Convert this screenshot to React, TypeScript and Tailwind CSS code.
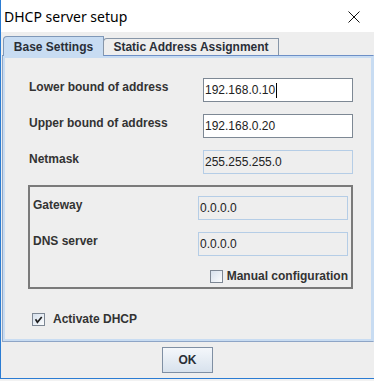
const LABEL = "text-[12px] leading-[16px] font-bold text-[#333333] mt-[1px]";
const FONT = { fontFamily: '"Liberation Sans", Arial, sans-serif' };

function TextField({ value, caret, disabled }: { value: string; caret?: boolean; disabled?: boolean }) {
  return (
    <div
      className={
        "w-[150px] h-[24px] flex items-center pl-[1px] text-[12px] text-[#222222] border " +
        (disabled ? "bg-[#eeeeee] border-[#b5cde6]" : "bg-white border-[#7d8894]")
      }
    >
      <span>{value}</span>
      {caret && <span className="w-px h-[15px] bg-black ml-[1px]" />}
    </div>
  );
}

function FieldRow({ label, labelWidth, children }: { label: string; labelWidth: string; children: React.ReactNode }) {
  return (
    <div className="flex items-start">
      <div className={labelWidth + " " + LABEL}>{label}</div>
      {children}
    </div>
  );
}

function CheckBox({ checked }: { checked?: boolean }) {
  return (
    <div className="w-[13px] h-[13px] border border-[#7d8794] bg-gradient-to-br from-[#d6e0ec] to-[#fbfcfd] flex items-center justify-center shrink-0">
      {checked && (
        <svg width="11" height="11" viewBox="0 0 11 11">
          <path d="M3 6 L4.4 8.2 L8.2 3.6" fill="none" stroke="#1e1e1e" strokeWidth="1.7" strokeLinecap="square" />
        </svg>
      )}
    </div>
  );
}

export default function App() {
  return (
    <div className="w-[374px] h-[381px] bg-[#f2f2f2]" style={FONT}>
      <div className="w-[374px] h-[379px] border-l border-b border-[#2b7cd3] bg-[#eeeeee] flex flex-col">
        {/* title bar */}
        <div className="h-[32px] bg-white flex items-center justify-between pl-[3px] pr-[14px] shrink-0">
          <span className="text-[14px] text-black pt-[1px]" style={{ fontFamily: '"Segoe UI", "Noto Sans", sans-serif' }}>
            DHCP server setup
          </span>
          <svg width="12" height="12" viewBox="0 0 12 12" className="mt-[2px]">
            <path d="M0.5 0.5 L11.5 11.5 M11.5 0.5 L0.5 11.5" stroke="#111" strokeWidth="1" />
          </svg>
        </div>

        {/* tabs */}
        <div className="h-[24px] -mb-px flex items-end pl-[2px] relative z-10 shrink-0">
          <div className="w-[101px] h-[20px] bg-[#c8dcf2] border-l border-t border-r border-[#7f98b8] rounded-tl-[4px] flex items-center justify-center text-[12px] font-bold text-[#2a2f38]">
            Base Settings
          </div>
          <div className="w-[176px] h-[17px] mb-px -ml-px bg-[#eeeeee] border-l border-t border-r border-[#8796a8] rounded-tl-[4px] flex items-center justify-center text-[12px] font-bold text-[#2a2f38]">
            Static Address Assignment
          </div>
        </div>

        {/* tab content */}
        <div className="w-[372px] h-[287px] ml-px border border-[#8ea5c6] border-t-[#6d8fc6] border-r-[#c8dcf2] bg-[#c8dcf2] p-[2px] shrink-0">
          <div className="h-full bg-[#eeeeee] pl-[23px] pt-[20px]">
            <div className="ml-px flex flex-col gap-[12px]">
              <FieldRow label="Lower bound of address" labelWidth="w-[174px]">
                <TextField value="192.168.0.10" caret />
              </FieldRow>
              <FieldRow label="Upper bound of address" labelWidth="w-[174px]">
                <TextField value="192.168.0.20" />
              </FieldRow>
              <FieldRow label="Netmask" labelWidth="w-[174px]">
                <TextField value="255.255.255.0" disabled />
              </FieldRow>
            </div>

            <div className="w-[325px] mt-[11px] border-2 border-[#7a7a7a] pt-[9px] pl-[3px] pr-[3px] pb-[3px]">
              <div className="flex flex-col gap-[12px]">
                <FieldRow label="Gateway" labelWidth="w-[165px]">
                  <TextField value="0.0.0.0" disabled />
                </FieldRow>
                <FieldRow label="DNS server" labelWidth="w-[165px]">
                  <TextField value="0.0.0.0" disabled />
                </FieldRow>
              </div>
              <div className="mt-[12px] h-[16px] flex items-center justify-end gap-[4px]">
                <CheckBox />
                <span className="text-[12px] leading-[16px] font-bold text-[#333333]">Manual configuration</span>
              </div>
            </div>

            <div className="mt-[22px] ml-[4px] h-[16px] flex items-center gap-[8px]">
              <CheckBox checked />
              <span className="text-[12px] leading-[16px] font-bold text-[#333333]">Activate DHCP</span>
            </div>
          </div>
        </div>

        {/* buttons */}
        <div className="flex-1 flex justify-center pt-[5px]">
          <button className="w-[51px] h-[26px] border border-[#7f8fa3] bg-gradient-to-b from-[#f4f7fb] to-[#d8e2ed] text-[12px] font-bold text-[#2a2f38]">
            OK
          </button>
        </div>
      </div>
    </div>
  );
}
